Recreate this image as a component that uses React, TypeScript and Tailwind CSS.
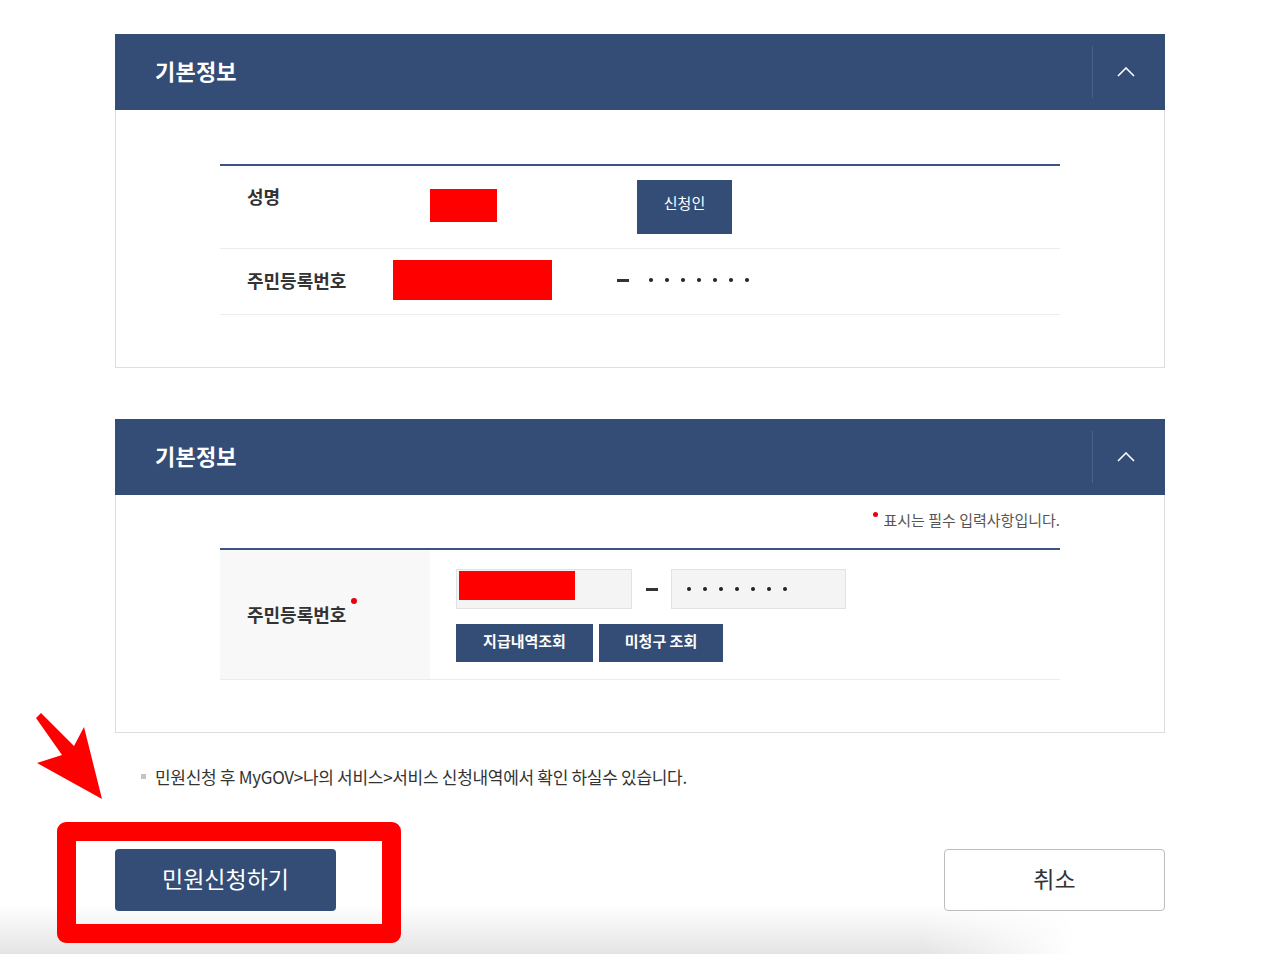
import React from 'react'

const NAVY = 'bg-[#334d77]'

function PanelHeader({ title }: { title: string }) {
    return (
        <div className={`${NAVY} flex h-[76px] items-center`}>
            <h2 className="mb-[3px] flex-1 pl-[40px] text-[22px] font-bold tracking-[0.2px] text-white">{title}</h2>
            <div className="h-[52px] w-px bg-[#4a6189]" />
            <div className="flex w-[72px] items-center justify-center pr-[6px]">
                <svg width="18" height="10" viewBox="0 0 18 10" fill="none">
                    <polyline points="1,9 9,1 17,9" stroke="white" strokeWidth="1.6" />
                </svg>
            </div>
        </div>
    )
}

function Dots() {
    return (
        <div className="flex gap-[12px]">
            {[0, 1, 2, 3, 4, 5, 6].map((i) => (
                <span key={i} className="h-[4px] w-[4px] rounded-full bg-[#222]" />
            ))}
        </div>
    )
}

function Dash() {
    return <span className="h-[3px] w-[12px] bg-[#333]" />
}

export default function App() {
    return (
        <div
            className="relative h-[954px] overflow-hidden bg-[image:linear-gradient(to_right,transparent_72%,#fff_84%),linear-gradient(to_bottom,#fff_905px,#e4e4e4_954px)] pt-[34px] text-[#333]"
            style={{ fontFamily: '"Noto Sans CJK KR", "Noto Sans", sans-serif' }}
        >
            <div className="mx-auto w-[1050px]">
                {/* panel 1 */}
                <section>
                    <PanelHeader title="기본정보" />
                    <div className="border border-t-0 border-[#dedede] bg-white px-[104px] pb-[52px] pt-[54px]">
                        <div className="border-t-2 border-[#3c5580]">
                            <div className="flex h-[83px] border-b border-[#ececec]">
                                <div className="w-[210px] pl-[27px] pt-[17px] text-[18px] font-bold">성명</div>
                                <div className="mt-[23px] h-[33px] w-[67px] bg-[#ff0000]" />
                                <button className={`${NAVY} ml-[140px] mt-[14px] h-[54px] w-[95px] pb-[7px] text-[15px] text-white`}>
                                    신청인
                                </button>
                            </div>
                            <div className="flex h-[66px] items-center border-b border-[#ececec] pb-[3px]">
                                <div className="pl-[27px] text-[18px] font-bold">주민등록번호</div>
                                <div className="ml-[47px] h-[40px] w-[159px] bg-[#ff0000]" />
                                <div className="ml-[65px] flex items-center">
                                    <Dash />
                                </div>
                                <div className="ml-[20px]">
                                    <Dots />
                                </div>
                            </div>
                        </div>
                    </div>
                </section>

                {/* panel 2 */}
                <section className="mt-[51px]">
                    <PanelHeader title="기본정보" />
                    <div className="border border-t-0 border-[#dedede] bg-white px-[104px] pb-[52px]">
                        <div className="flex h-[53px] items-center justify-end pb-[3px] text-[15px] text-[#555]">
                            <span className="mb-[12px] mr-[6px] h-[5px] w-[5px] rounded-full bg-[#e60012]" />
                            표시는 필수 입력사항입니다.
                        </div>
                        <div className="flex border-t-2 border-b border-[#3c5580] border-b-[#ececec]">
                            <div className="flex w-[210px] items-center bg-[#f8f8f8] pl-[27px]">
                                <span className="relative text-[18px] font-bold">
                                    주민등록번호
                                    <span className="absolute -right-[11px] top-[-3px] h-[6px] w-[6px] rounded-full bg-[#e60012]" />
                                </span>
                            </div>
                            <div className="pb-[17px] pl-[26px] pt-[19px]">
                                <div className="flex items-center">
                                    <div className="h-[40px] w-[176px] border border-[#e2e2e2] bg-[#f4f4f4] pl-[2px] pt-[1px]">
                                        <div className="h-[29px] w-[116px] bg-[#ff0000]" />
                                    </div>
                                    <div className="flex w-[39px] justify-center">
                                        <Dash />
                                    </div>
                                    <div className="flex h-[40px] w-[175px] items-center border border-[#e2e2e2] bg-[#f4f4f4] pl-[15px]">
                                        <Dots />
                                    </div>
                                </div>
                                <div className="mt-[15px] flex gap-[6px]">
                                    <button className={`${NAVY} h-[38px] w-[137px] pb-[3px] text-[15px] font-bold text-white`}>
                                        지급내역조회
                                    </button>
                                    <button className={`${NAVY} h-[38px] w-[124px] pb-[3px] text-[15px] font-bold text-white`}>
                                        미청구 조회
                                    </button>
                                </div>
                            </div>
                        </div>
                    </div>
                </section>

                <p className="mt-[31px] flex items-center pl-[26px] text-[17px] tracking-[-0.3px] text-[#333]">
                    <span className="mr-[9px] h-[5px] w-[5px] bg-[#c4c4c4]" />
                    민원신청 후 MyGOV&gt;나의 서비스&gt;서비스 신청내역에서 확인 하실수 있습니다.
                </p>

                <div className="mt-[59px] flex justify-between">
                    <button className={`${NAVY} h-[62px] w-[221px] rounded-[4px] pb-[3px] text-[23px] text-white`}>
                        민원신청하기
                    </button>
                    <button className="h-[62px] w-[221px] rounded-[4px] border border-[#bdbdbd] bg-white pb-[3px] text-[23px] text-[#333]">
                        취소
                    </button>
                </div>
            </div>

            {/* annotation overlay */}
            <div className="pointer-events-none absolute left-[57px] top-[822px] h-[121px] w-[344px] rounded-[9px] border-[19px] border-[#ff0000]" />
            <svg className="pointer-events-none absolute left-[30px] top-[705px]" width="80" height="100" viewBox="30 705 80 100">
                <polygon points="36,718 41,713 74,746 84,727 102,799 37,763 62,755" fill="#ff0000" />
            </svg>
        </div>
    )
}
